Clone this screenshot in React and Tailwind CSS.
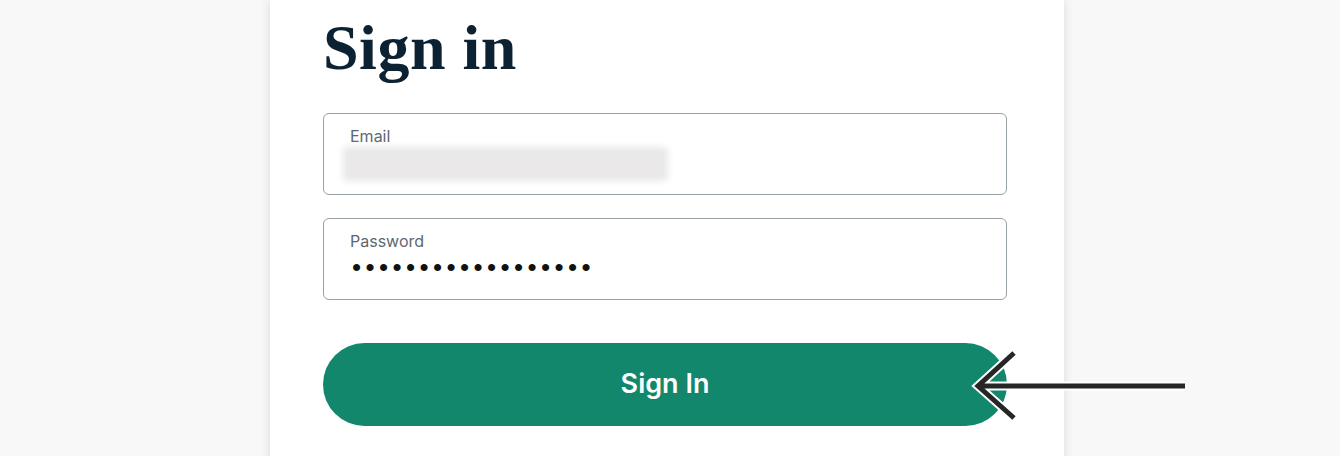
import React from 'react';

export default function App() {
  return (
    <div className="relative h-[456px] w-[1340px] overflow-hidden bg-[#f8f8f8]">
      <div className="ml-[270px] h-[480px] w-[794px] bg-white pl-[53px] pr-[57px] pt-[16px] shadow-[0_0_10px_rgba(0,0,0,0.12)]">
        <h1 className="font-['Liberation_Serif',serif] text-[64px] font-bold leading-[64px] tracking-[0.5px] text-[#0c2233]">
          Sign in
        </h1>

        <div className="mt-[33px] h-[82px] rounded-[6px] border-[1.5px] border-[#98a1a6] pl-[26px] pt-[12px]">
          <div className="font-['Inter',sans-serif] text-[16px] leading-[20px] text-[#5d6770]">Email</div>
          <div className="-ml-[7px] mt-[1px] h-[34px] w-[325px] rounded-[4px] bg-[#eae8e9] blur-[3px]" />
        </div>

        <div className="mt-[23px] h-[82px] rounded-[6px] border-[1.5px] border-[#98a1a6] pl-[28px] pt-[12px]">
          <div className="-ml-[2px] font-['Inter',sans-serif] text-[16px] leading-[20px] text-[#5d6770]">Password</div>
          <div className="mt-[2px] font-['Liberation_Sans',sans-serif] text-[26px] leading-[28px] tracking-[4.4px] text-[#111]">
            ••••••••••••••••••
          </div>
        </div>

        <button className="mt-[43px] flex h-[83px] w-full items-center justify-center rounded-full bg-[#12876b] font-['Inter',sans-serif] text-[27px] font-semibold text-white">
          Sign In
        </button>
      </div>

      <svg className="absolute left-[963px] top-[340px]" width="240" height="95" viewBox="0 0 240 95">
        <g fill="none" strokeLinecap="butt" strokeLinejoin="miter">
          <path d="M51 13 L15 46 L51 78 M15 46 L222 46" stroke="#ffffff" strokeWidth="9" />
          <path d="M51 13 L15 46 L51 78 M15 46 L222 46" stroke="#262626" strokeWidth="5" />
        </g>
      </svg>
    </div>
  );
}
